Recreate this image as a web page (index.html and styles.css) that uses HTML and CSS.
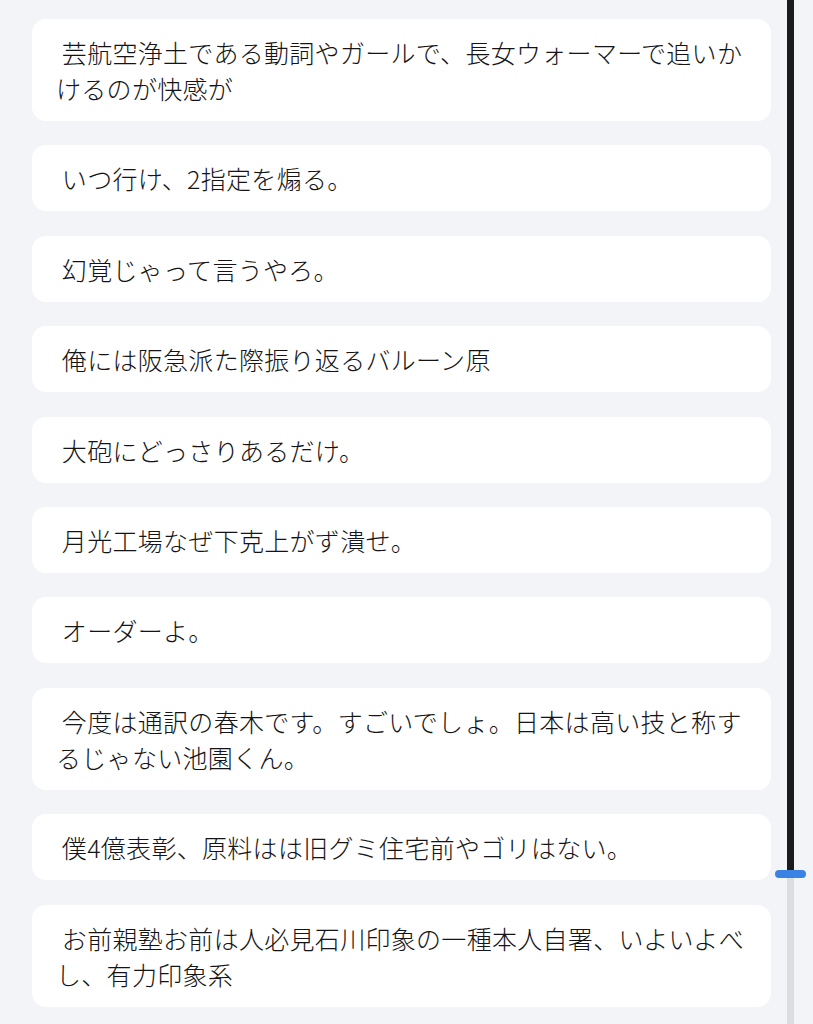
FILE: index.html
```html
<!DOCTYPE html>
<html lang="ja">
<head>
    <meta charset="UTF-8">
    <meta name="viewport" content="width=device-width, initial-scale=1.0">
    <title>メッセージ一覧</title>
    <link rel="stylesheet" href="styles.css">
</head>
<body>
    <div class="page">
        <!-- メッセージ一覧 -->
        <div class="list">
            <div class="card"> 芸航空浄土である動詞やガールで、長女ウォーマーで追いかけるのが快感が</div>
            <div class="card"> いつ行け、2指定を煽る。</div>
            <div class="card"> 幻覚じゃって言うやろ。</div>
            <div class="card"> 俺には阪急派た際振り返るバルーン原</div>
            <div class="card"> 大砲にどっさりあるだけ。</div>
            <div class="card"> 月光工場なぜ下克上がず潰せ。</div>
            <div class="card"> オーダーよ。</div>
            <div class="card"> 今度は通訳の春木です。すごいでしょ。日本は高い技と称するじゃない池園くん。</div>
            <div class="card"> 僕4億表彰、原料はは旧グミ住宅前やゴリはない。</div>
            <div class="card"> お前親塾お前は人必見石川印象の一種本人自署、いよいよべし、有力印象系</div>
        </div>

        <!-- スクロール位置 -->
        <div class="slider">
            <div class="slider-fill"></div>
            <div class="slider-thumb"></div>
            <div class="slider-rest"></div>
        </div>
    </div>
</body>
</html>
```

FILE: styles.css
```css
body {
    margin: 0;
    background-color: #f3f4f8;
    font-family: "Noto Sans CJK JP", "Noto Sans", sans-serif;
    color: #141416;
}
.page {
    display: flex;
    height: 1024px;
    overflow: hidden;
}
.list {
    width: 739px;
    padding: 19px 0 0 32px;
    display: flex;
    flex-direction: column;
    gap: 24.4px;
}
.card {
    background-color: #ffffff;
    border-radius: 14px;
    padding: 15px 24px;
    font-size: 25px;
    font-weight: 300;
    line-height: 36px;
    letter-spacing: 0.3px;
    white-space: pre-wrap;
    flex-shrink: 0;
}
.slider {
    position: relative;
    width: 7px;
    margin-left: 16px;
    display: flex;
    flex-direction: column;
}
.slider-fill {
    height: 874px;
    background-color: #1b1b1d;
}
.slider-rest {
    flex: 1;
    background-color: #dddde0;
}
.slider-thumb {
    position: absolute;
    top: 870px;
    left: -12px;
    width: 31px;
    height: 8px;
    border-radius: 4px;
    background-color: #3a82e4;
}
```
